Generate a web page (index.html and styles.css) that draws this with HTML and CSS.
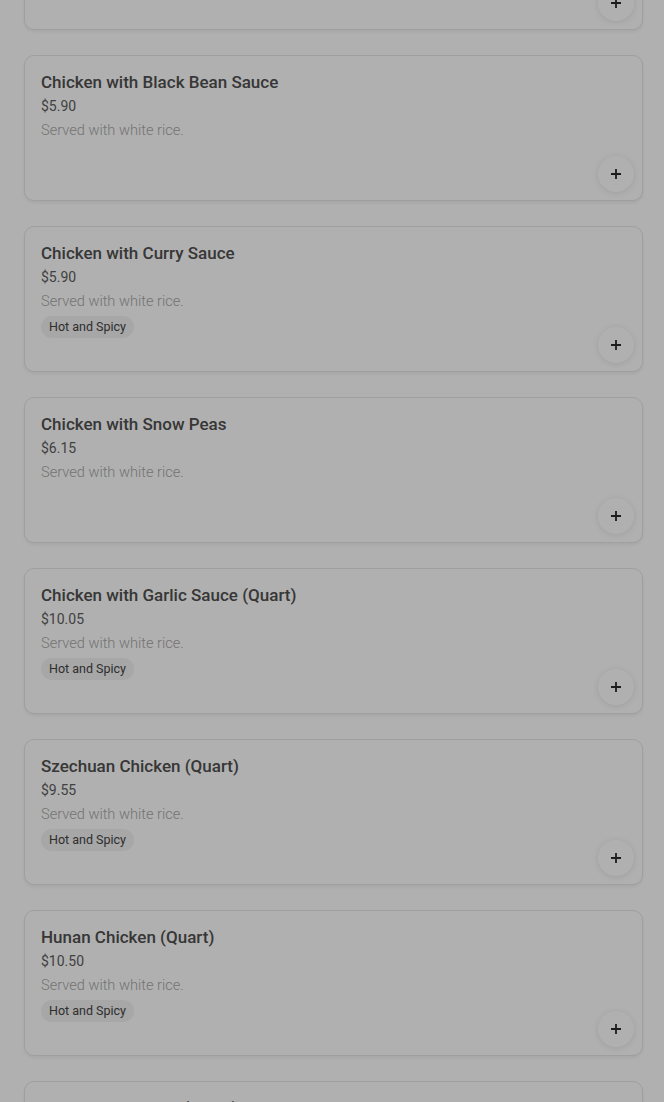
FILE: index.html
```html
<!DOCTYPE html>
<html lang="en">
<head>
  <meta charset="UTF-8">
  <meta name="viewport" content="width=device-width, initial-scale=1.0">
  <title>Menu - Chicken</title>
  <link rel="stylesheet" href="styles.css">
</head>
<body>
  <main class="menu">
    <div class="item">
      <div class="item-info">
        <h3 class="item-name">Chicken with Broccoli</h3>
        <div class="item-price">$5.90</div>
        <p class="item-desc">Served with white rice.</p>
      </div>
      <button class="add-btn" aria-label="Add"><svg viewBox="0 0 12 12"><path d="M6 1v10M1 6h10"/></svg></button>
    </div>

    <div class="item">
      <div class="item-info">
        <h3 class="item-name">Chicken with Black Bean Sauce</h3>
        <div class="item-price">$5.90</div>
        <p class="item-desc">Served with white rice.</p>
      </div>
      <button class="add-btn" aria-label="Add"><svg viewBox="0 0 12 12"><path d="M6 1v10M1 6h10"/></svg></button>
    </div>

    <div class="item">
      <div class="item-info">
        <h3 class="item-name">Chicken with Curry Sauce</h3>
        <div class="item-price">$5.90</div>
        <p class="item-desc">Served with white rice.</p>
        <span class="tag">Hot and Spicy</span>
      </div>
      <button class="add-btn" aria-label="Add"><svg viewBox="0 0 12 12"><path d="M6 1v10M1 6h10"/></svg></button>
    </div>

    <div class="item">
      <div class="item-info">
        <h3 class="item-name">Chicken with Snow Peas</h3>
        <div class="item-price">$6.15</div>
        <p class="item-desc">Served with white rice.</p>
      </div>
      <button class="add-btn" aria-label="Add"><svg viewBox="0 0 12 12"><path d="M6 1v10M1 6h10"/></svg></button>
    </div>

    <div class="item">
      <div class="item-info">
        <h3 class="item-name">Chicken with Garlic Sauce (Quart)</h3>
        <div class="item-price">$10.05</div>
        <p class="item-desc">Served with white rice.</p>
        <span class="tag">Hot and Spicy</span>
      </div>
      <button class="add-btn" aria-label="Add"><svg viewBox="0 0 12 12"><path d="M6 1v10M1 6h10"/></svg></button>
    </div>

    <div class="item">
      <div class="item-info">
        <h3 class="item-name">Szechuan Chicken (Quart)</h3>
        <div class="item-price">$9.55</div>
        <p class="item-desc">Served with white rice.</p>
        <span class="tag">Hot and Spicy</span>
      </div>
      <button class="add-btn" aria-label="Add"><svg viewBox="0 0 12 12"><path d="M6 1v10M1 6h10"/></svg></button>
    </div>

    <div class="item">
      <div class="item-info">
        <h3 class="item-name">Hunan Chicken (Quart)</h3>
        <div class="item-price">$10.50</div>
        <p class="item-desc">Served with white rice.</p>
        <span class="tag">Hot and Spicy</span>
      </div>
      <button class="add-btn" aria-label="Add"><svg viewBox="0 0 12 12"><path d="M6 1v10M1 6h10"/></svg></button>
    </div>

    <div class="item">
      <div class="item-info">
        <h3 class="item-name">Kung Pao Chicken (Quart)</h3>
        <div class="item-price">$10.50</div>
        <p class="item-desc">Served with white rice.</p>
        <span class="tag">Hot and Spicy</span>
      </div>
      <button class="add-btn" aria-label="Add"><svg viewBox="0 0 12 12"><path d="M6 1v10M1 6h10"/></svg></button>
    </div>
  </main>

  <!-- fondo oscuro del modal -->
  <div class="backdrop"></div>
</body>
</html>
```

FILE: styles.css
```css
body {
  font-family: Roboto, "Noto Sans", sans-serif;
  background-color: #fff;
  color: #000;
  margin: 0;
  padding: 0;
  overflow: hidden;
}
.menu {
  display: flex;
  flex-direction: column;
  gap: 25px;
  padding: 0 21px 0 24px;
  margin-top: -116px;
}
.item {
  display: flex;
  justify-content: space-between;
  height: 146px;
  box-sizing: border-box;
  padding: 15px 8px 8px 16px;
  border: 1px solid #e6e6e6;
  border-radius: 10px;
  background-color: #fff;
  box-shadow: 0 2px 3px rgba(0, 0, 0, 0.06);
}
.item-info {
  display: flex;
  flex-direction: column;
  align-items: flex-start;
}
.item-name {
  margin: 0;
  font-size: 17px;
  font-weight: 500;
  line-height: 22px;
  color: #505050;
}
.item-price {
  margin-top: 3px;
  font-size: 14px;
  line-height: 20px;
  color: #5e5e5e;
}
.item-desc {
  margin: 4px 0 0;
  font-size: 14.6px;
  font-weight: 300;
  line-height: 20px;
  color: #a8a8a8;
}
.tag {
  margin-top: 5px;
  padding: 3px 8px;
  border-radius: 11px;
  background-color: #f2f2f2;
  font-size: 12.5px;
  line-height: 16px;
  color: #444;
}
.add-btn {
  align-self: flex-end;
  display: flex;
  align-items: center;
  justify-content: center;
  width: 36px;
  height: 36px;
  border: none;
  border-radius: 50%;
  background-color: #fff;
  box-shadow: 0 1px 6px rgba(0, 0, 0, 0.1);
  padding: 0;
  cursor: pointer;
}
.add-btn svg {
  width: 12px;
  height: 12px;
  fill: none;
  stroke: #2a2a2a;
  stroke-width: 1.8;
}
.backdrop {
  position: fixed;
  inset: 0;
  background-color: rgba(0, 0, 0, 0.31);
}
```
